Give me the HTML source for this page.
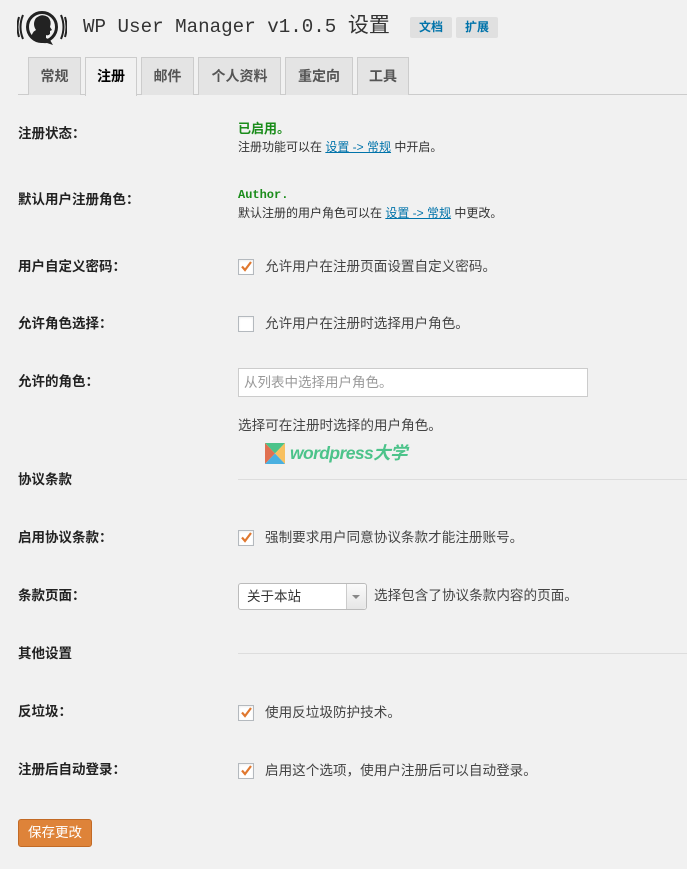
<!DOCTYPE html>
<html><head><meta charset="utf-8"><style>
*{margin:0;padding:0;box-sizing:border-box}
body{width:687px;height:869px;background:#f1f1f1;font-family:"Liberation Sans","Noto Sans CJK SC",sans-serif;font-size:13.5px;color:#444;position:relative;overflow:hidden}
.a{position:absolute;white-space:nowrap}
.lbl{position:absolute;left:18px;font-weight:bold;font-size:13.5px;color:#222;line-height:16px}
.tab{position:absolute;top:57px;height:38px;border:1px solid #ccc;border-bottom:none;background:#e4e4e4;font-weight:bold;font-size:14px;color:#555;text-align:center;line-height:36px}
.cb{position:absolute;left:238px;width:16px;height:16px;border:1px solid #b4b9be;background:#fff;box-shadow:inset 0 1px 2px rgba(0,0,0,.07)}
.t{position:absolute;left:265px;font-size:13.6px;color:#444;line-height:16px}
.hr{position:absolute;left:238px;right:0;height:1px;background:#ddd}
a{color:#0073aa;text-decoration:underline}
</style></head><body>
<svg class="a" style="left:17px;top:7px" width="50" height="42" viewBox="0 0 50 42">
<g fill="none" stroke="#222" stroke-width="2">
<path d="M6 8 Q1 20 6 32"/><path d="M2 10 Q-1 20 2 30"/>
<path d="M44 8 Q49 20 44 32"/><path d="M48 10 Q51 20 48 30"/>
</g>
<circle cx="25" cy="20" r="14.5" fill="none" stroke="#222" stroke-width="3"/>
<path d="M14 31 Q15 25 19 23 Q15 17 19 11 Q25 6 31 10 Q35 14 33 20 L35 23 L33 24 L33 27 Q31 29 29 28 L29 31 L33 33 L36 38 L30 36 Q22 37 14 31 Z" fill="#222"/>
</svg>
<div class="a" style="left:83px;top:14px;font-family:'Liberation Mono','Noto Sans CJK SC',monospace;font-size:19.2px;color:#333;line-height:26px">WP User Manager v1.0.5 <span style="font-size:21px">设置</span></div>
<div class="a" style="left:410px;top:17px;width:42px;height:21px;background:#e0e0e0;border-radius:2px;color:#0073aa;font-weight:bold;font-size:12px;text-align:center;line-height:21px">文档</div>
<div class="a" style="left:456px;top:17px;width:42px;height:21px;background:#e0e0e0;border-radius:2px;color:#0073aa;font-weight:bold;font-size:12px;text-align:center;line-height:21px">扩展</div>
<div class="a" style="left:18px;right:0;top:94px;height:1px;background:#ccc"></div>
<div class="tab" style="left:28px;width:53px">常规</div>
<div class="tab" style="left:85px;width:52px;background:#f1f1f1;color:#000;height:39px">注册</div>
<div class="tab" style="left:141px;width:53px">邮件</div>
<div class="tab" style="left:198px;width:83px">个人资料</div>
<div class="tab" style="left:285px;width:68px">重定向</div>
<div class="tab" style="left:357px;width:52px">工具</div>

<div class="lbl" style="top:126px">注册状态：</div>
<div class="a" style="left:238px;top:121px;font-weight:bold;color:#1a8c1a;font-size:13px;line-height:16px">已启用。</div>
<div class="a" style="left:238px;top:140px;font-size:12px;color:#333;line-height:14px">注册功能可以在 <a>设置 -&gt; 常规</a> 中开启。</div>

<div class="lbl" style="top:192px">默认用户注册角色：</div>
<div class="a" style="left:238px;top:187px;font-weight:bold;color:#1a8c1a;font-family:'Liberation Mono',monospace;font-size:12px;line-height:16px">Author.</div>
<div class="a" style="left:238px;top:206px;font-size:12px;color:#333;line-height:14px">默认注册的用户角色可以在 <a>设置 -&gt; 常规</a> 中更改。</div>

<div class="lbl" style="top:259px">用户自定义密码：</div>
<div class="cb" style="top:259px"></div>
<svg class="a" style="left:240px;top:260px" width="13" height="13" viewBox="0 0 13 13"><path d="M2 6.5 L5 10 L11 2" fill="none" stroke="#e0782f" stroke-width="2.2"/></svg>
<div class="t" style="top:259px">允许用户在注册页面设置自定义密码。</div>

<div class="lbl" style="top:316px">允许角色选择：</div>
<div class="cb" style="top:316px"></div>
<div class="t" style="top:316px">允许用户在注册时选择用户角色。</div>

<div class="lbl" style="top:374px">允许的角色：</div>
<div class="a" style="left:238px;top:368px;width:350px;height:29px;background:#fff;border:1px solid #ccc;color:#999;font-size:13.5px;line-height:27px;padding-left:5px">从列表中选择用户角色。</div>
<div class="a" style="left:238px;top:418px;color:#444;font-size:13.6px;line-height:16px">选择可在注册时选择的用户角色。</div>
<svg class="a" style="left:265px;top:443px" width="20" height="21" viewBox="0 0 20 21">
<polygon points="0,0 20,0 10,10.5" fill="#4cc38a"/><polygon points="0,0 10,10.5 0,21" fill="#e07050"/>
<polygon points="20,0 20,21 10,10.5" fill="#f8c060"/><polygon points="0,21 20,21 10,10.5" fill="#4ab0e0"/></svg>
<div class="a" style="left:290px;top:442px;color:#4cc38a;font-weight:bold;font-style:italic;font-size:17.5px;line-height:22px;letter-spacing:-0.6px">wordpress大学</div>

<div class="lbl" style="top:472px">协议条款</div>
<div class="hr" style="top:479px"></div>

<div class="lbl" style="top:530px">启用协议条款：</div>
<div class="cb" style="top:530px"></div><svg class="a" style="left:240px;top:531px" width="13" height="13" viewBox="0 0 13 13"><path d="M2 6.5 L5 10 L11 2" fill="none" stroke="#e0782f" stroke-width="2.2"/></svg>
<div class="t" style="top:530px">强制要求用户同意协议条款才能注册账号。</div>

<div class="lbl" style="top:588px">条款页面：</div>
<div class="a" style="left:238px;top:583px;width:129px;height:27px;background:#fff;border:1px solid #bbb;border-radius:3px;font-size:13.5px;color:#333;line-height:25px;padding-left:8px">关于本站</div>
<div class="a" style="left:346px;top:584px;width:20px;height:25px;border-left:1px solid #ccc;background:linear-gradient(#fafafa,#e6e6e6);border-radius:0 3px 3px 0"></div>
<div class="a" style="left:352px;top:595px;width:0;height:0;border-left:4px solid transparent;border-right:4px solid transparent;border-top:4px solid #888"></div>
<div class="a" style="left:374px;top:588px;color:#444;font-size:13.6px;line-height:16px">选择包含了协议条款内容的页面。</div>

<div class="lbl" style="top:646px">其他设置</div>
<div class="hr" style="top:653px"></div>

<div class="lbl" style="top:704px">反垃圾：</div>
<div class="cb" style="top:705px"></div><svg class="a" style="left:240px;top:706px" width="13" height="13" viewBox="0 0 13 13"><path d="M2 6.5 L5 10 L11 2" fill="none" stroke="#e0782f" stroke-width="2.2"/></svg>
<div class="t" style="top:705px">使用反垃圾防护技术。</div>

<div class="lbl" style="top:762px">注册后自动登录：</div>
<div class="cb" style="top:763px"></div><svg class="a" style="left:240px;top:764px" width="13" height="13" viewBox="0 0 13 13"><path d="M2 6.5 L5 10 L11 2" fill="none" stroke="#e0782f" stroke-width="2.2"/></svg>
<div class="t" style="top:763px">启用这个选项，使用户注册后可以自动登录。</div>

<div class="a" style="left:18px;top:819px;width:74px;height:28px;background:#de8339;border:1px solid #c26a25;border-radius:3px;color:#fff;font-size:13.5px;text-align:center;line-height:26px">保存更改</div>
</body></html>
